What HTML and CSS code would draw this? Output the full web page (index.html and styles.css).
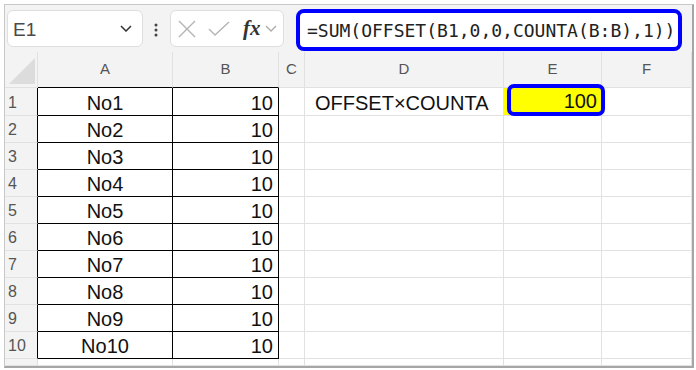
FILE: index.html
```html
<!DOCTYPE html>
<html>
<head>
    <meta charset="UTF-8">
    <title>OFFSET COUNTA</title>
    <link rel="stylesheet" href="styles.css">
</head>
<body>
    <div class="window">
        <!-- Formula bar -->
        <div class="toolbar">
            <div class="name-box">
                <span class="cell-ref">E1</span>
                <svg class="chevron" width="12" height="7" viewBox="0 0 12 7"><polyline points="1,1 6,6 11,1" fill="none" stroke="#333" stroke-width="1.5"/></svg>
            </div>
            <svg class="dots" width="4" height="14" viewBox="0 0 4 14">
                <circle cx="2" cy="2" r="1.5" fill="#444"/>
                <circle cx="2" cy="7" r="1.5" fill="#444"/>
                <circle cx="2" cy="12" r="1.5" fill="#444"/>
            </svg>
            <div class="func-box">
                <svg width="20" height="18" viewBox="0 0 20 18"><path d="M2 1 L18 17 M18 1 L2 17" stroke="#b4b4b4" stroke-width="1.4" fill="none"/></svg>
                <svg width="22" height="16" viewBox="0 0 22 16"><polyline points="1,8 7,14 21,1" stroke="#b4b4b4" stroke-width="1.4" fill="none"/></svg>
                <span class="fx">fx</span>
                <svg width="12" height="7" viewBox="0 0 12 7"><polyline points="1,1 6,6 11,1" fill="none" stroke="#aaa" stroke-width="1.3"/></svg>
            </div>
            <div class="formula">=SUM(OFFSET(B1,0,0,COUNTA(B:B),1))</div>
        </div>

        <!-- Sheet -->
        <div class="sheet">
            <div class="corner"><div class="triangle"></div></div>
            <div class="col-head framed">A</div>
            <div class="col-head framed">B</div>
            <div class="col-head">C</div>
            <div class="col-head">D</div>
            <div class="col-head">E</div>
            <div class="col-head">F</div>

            <div class="row-head framed">1</div>
            <div class="cell name">No1</div>
            <div class="cell num">10</div>
            <div class="cell"></div>
            <div class="cell label">OFFSET×COUNTA</div>
            <div class="cell result"><div class="highlight">100</div></div>
            <div class="cell"></div>

            <div class="row-head framed">2</div>
            <div class="cell name">No2</div>
            <div class="cell num">10</div>
            <div class="cell"></div><div class="cell"></div><div class="cell"></div><div class="cell"></div>

            <div class="row-head framed">3</div>
            <div class="cell name">No3</div>
            <div class="cell num">10</div>
            <div class="cell"></div><div class="cell"></div><div class="cell"></div><div class="cell"></div>

            <div class="row-head framed">4</div>
            <div class="cell name">No4</div>
            <div class="cell num">10</div>
            <div class="cell"></div><div class="cell"></div><div class="cell"></div><div class="cell"></div>

            <div class="row-head framed">5</div>
            <div class="cell name">No5</div>
            <div class="cell num">10</div>
            <div class="cell"></div><div class="cell"></div><div class="cell"></div><div class="cell"></div>

            <div class="row-head framed">6</div>
            <div class="cell name">No6</div>
            <div class="cell num">10</div>
            <div class="cell"></div><div class="cell"></div><div class="cell"></div><div class="cell"></div>

            <div class="row-head framed">7</div>
            <div class="cell name">No7</div>
            <div class="cell num">10</div>
            <div class="cell"></div><div class="cell"></div><div class="cell"></div><div class="cell"></div>

            <div class="row-head framed">8</div>
            <div class="cell name">No8</div>
            <div class="cell num">10</div>
            <div class="cell"></div><div class="cell"></div><div class="cell"></div><div class="cell"></div>

            <div class="row-head framed">9</div>
            <div class="cell name">No9</div>
            <div class="cell num">10</div>
            <div class="cell"></div><div class="cell"></div><div class="cell"></div><div class="cell"></div>

            <div class="row-head framed">10</div>
            <div class="cell name">No10</div>
            <div class="cell num">10</div>
            <div class="cell"></div><div class="cell"></div><div class="cell"></div><div class="cell"></div>

            <div class="row-head"></div>
            <div class="cell"></div><div class="cell"></div><div class="cell"></div>
            <div class="cell"></div><div class="cell"></div><div class="cell"></div>
        </div>
    </div>
</body>
</html>
```

FILE: styles.css
```css
/* Page */
body {
    margin: 0;
    background-color: #ffffff;
    font-family: "Liberation Sans", Arial, sans-serif;
}

.window {
    margin: 4px 0 0 4px;
    width: 687px;
    height: 361px;
    border: 1px solid #c8c8c8;
    border-right: 2px solid #a6a6a6;
    border-bottom: 2px solid #a6a6a6;
    background-color: #f3f3f3;
    overflow: hidden;
    display: flex;
    flex-direction: column;
}

/* Formula bar */
.toolbar {
    height: 47px;
    box-sizing: border-box;
    display: flex;
    align-items: flex-start;
    padding: 5px 0 0 2px;
}

.name-box, .func-box {
    height: 37px;
    box-sizing: border-box;
    background-color: #ffffff;
    border: 1px solid #dedede;
    border-radius: 6px;
    display: flex;
    align-items: center;
}

.name-box {
    width: 136px;
    padding: 0 10px 0 5px;
    justify-content: space-between;
}

.cell-ref {
    font-size: 19px;
    color: #4a4a4a;
    padding-top: 2px;
}

.dots {
    margin: 13px 12px 0 11px;
}

.func-box {
    width: 114px;
    padding-left: 6px;
}

.func-box svg:nth-child(2) {
    margin-left: 11px;
}

.fx {
    font-family: "Liberation Serif", "Times New Roman", serif;
    font-style: italic;
    font-weight: bold;
    font-size: 21px;
    color: #333;
    margin: 0 4px 0 13px;
}

.formula {
    margin: -1px 0 0 12px;
    width: 386px;
    height: 42px;
    box-sizing: border-box;
    border: 4px solid #0000ff;
    border-radius: 8px;
    background-color: #ffffff;
    font-family: "DejaVu Sans Mono", "Liberation Mono", monospace;
    font-size: 18px;
    color: #222;
    padding-left: 7px;
    display: flex;
    align-items: center;
}

/* Sheet grid */
.sheet {
    flex: 1;
    display: grid;
    grid-template-columns: 33px 135px 106px 26px 199px 98px 1fr;
    grid-template-rows: 36px 28px repeat(9, 27px) 1fr;
    background-color: #ffffff;
}

.sheet > div {
    box-sizing: border-box;
    border-right: 1px solid #e1e1e1;
    border-bottom: 1px solid #e1e1e1;
}

.corner {
    background-color: #f3f3f3;
    display: flex;
    align-items: flex-end;
    justify-content: flex-end;
    padding: 0 2px 3px 0;
}

.triangle {
    width: 26px;
    height: 26px;
    background-color: #dcdcdc;
    clip-path: polygon(100% 0, 100% 100%, 0 100%);
}

.col-head {
    background-color: #f3f3f3;
    color: #555;
    font-size: 15px;
    display: flex;
    align-items: center;
    justify-content: center;
    padding-bottom: 2px;
}

.sheet > .col-head.framed {
    border-bottom-color: #000;
}

.row-head {
    background-color: #f3f3f3;
    color: #555;
    font-size: 16px;
    display: flex;
    align-items: center;
    padding: 2px 0 0 3px;
}

.sheet > .row-head.framed {
    border-right-color: #000;
}

.cell {
    font-size: 20px;
    color: #111;
    display: flex;
    align-items: center;
    padding-top: 3px;
}

.sheet > .name, .sheet > .num {
    border-right-color: #000;
    border-bottom-color: #000;
}

.name {
    justify-content: center;
}

.num {
    justify-content: flex-end;
    padding-right: 5px;
}

.label {
    padding-left: 10px;
}

.result {
    position: relative;
    background-color: #ffff00;
}

.highlight {
    position: absolute;
    left: 3px;
    top: -4px;
    width: 98px;
    height: 32px;
    box-sizing: border-box;
    border: 4px solid #0000ff;
    border-radius: 7px;
    background-color: #ffff00;
    display: flex;
    align-items: center;
    justify-content: flex-end;
    padding: 2px 4px 0 0;
    z-index: 1;
}
```
